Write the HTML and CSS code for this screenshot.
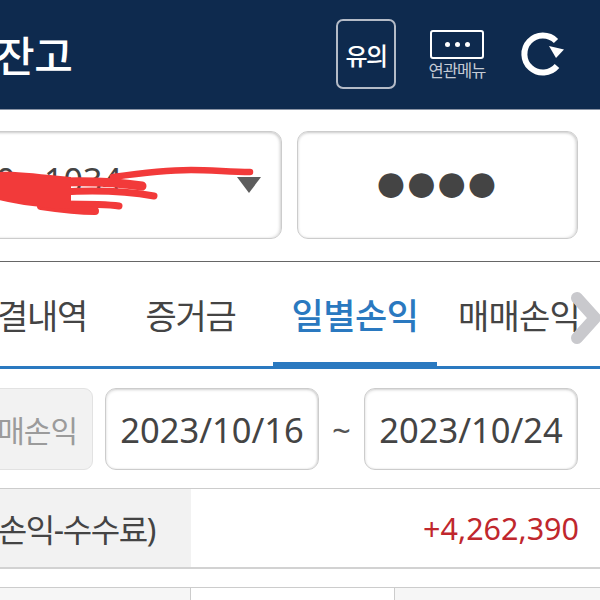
FILE: index.html
```html
<!DOCTYPE html>
<html lang="ko">
<head>
<meta charset="utf-8">
<title>잔고</title>
<link rel="stylesheet" href="styles.css">
</head>
<body>
<div class="page">
  <header class="header">
    <h1 class="title">잔고</h1>
    <div class="actions">
      <div class="notice">유의</div>
      <div class="menu">
        <div class="menu-box"><i></i><i></i><i></i></div>
        <div class="menu-label">연관메뉴</div>
      </div>
      <svg class="refresh" width="48" height="52" viewBox="520 29 48 52">
        <path d="M557 66A18.5 18.5 0 1 1 556 41" fill="none" stroke="#fff" stroke-width="6"/>
        <path d="M549 46L564 49.5L556 58Z" fill="#fff"/>
      </svg>
    </div>
  </header>

  <section class="account-row">
    <div class="field account">
      <span class="account-no">0 - 1034</span>
      <span class="caret"></span>
      <svg class="scribble" width="260" height="60" viewBox="0 0 260 60">
        <g fill="none" stroke="#f23a3a" stroke-linecap="round" stroke-linejoin="round">
          <path d="M112 15C140 11 165 8 190 8C210 8 230 10 249 10" stroke-width="6.5"/>
          <path d="M60 20C90 19 115 20 141 24" stroke-width="9"/>
          <path d="M60 30C95 28 125 29 153 34" stroke-width="7"/>
          <path d="M60 42C85 42 105 42 118 44" stroke-width="7"/>
          <path d="M40 44C60 47 80 49 94 49" stroke-width="8"/>
        </g>
        <path d="M-2 10C15 9 35 12 70 15L70 47C40 46 20 43 -2 38Z" fill="#f23a3a"/>
      </svg>
    </div>
    <div class="field password">●●●●</div>
  </section>

  <nav class="tabs">
    <div class="tab tab-a">결내역</div>
    <div class="tab tab-b">증거금</div>
    <div class="tab tab-c active">일별손익</div>
    <div class="tab tab-d">매매손익</div>
    <svg class="next" width="32" height="54" viewBox="0 0 32 54">
      <path d="M7 7L25 27L7 47" fill="none" stroke="#c9c9cd" stroke-width="12" stroke-linecap="round" stroke-linejoin="round"/>
    </svg>
  </nav>

  <section class="filter-row">
    <div class="kind">매손익</div>
    <div class="date">2023/10/16</div>
    <div class="tilde">~</div>
    <div class="date">2023/10/24</div>
  </section>

  <section class="summary">
    <div class="summary-label">손익-수수료)</div>
    <div class="summary-value">+4,262,390</div>
  </section>

  <section class="grid-head">
    <div class="cell-a"></div>
    <div class="cell-b"></div>
    <div class="cell-c"></div>
  </section>
</div>
</body>
</html>
```

FILE: styles.css
```css
* { box-sizing: border-box; margin: 0; padding: 0; }
html, body { width: 600px; height: 600px; overflow: hidden; background: #fff; }
body { font-family: "Noto Sans", "Noto Sans CJK KR", sans-serif; color: #444; }
.page { width: 600px; height: 600px; overflow: hidden; }

.header { height: 110px; background: #0e2a4e; border-bottom: 1px solid #8a94a5; display: flex; align-items: center; justify-content: space-between; }
.title { font-size: 42px; font-weight: 500; color: #fff; margin-left: -4px; margin-top: 2px; line-height: 1; letter-spacing: -.5px; }
.actions { display: flex; align-items: center; margin-right: 32px; }
.notice { width: 60px; height: 70px; margin-top: -1px; border: 2.5px solid #b4bbc7; border-radius: 7px; color: #fff; font-size: 24px; font-weight: 500; display: flex; align-items: center; justify-content: center; letter-spacing: -1.5px; }
.menu { width: 56px; margin-left: 33px; margin-top: 1px; display: flex; flex-direction: column; align-items: center; }
.menu-box { width: 54px; height: 29px; border: 2px solid #fff; border-radius: 3px; display: flex; align-items: center; justify-content: center; gap: 5px; }
.menu-box i { width: 5px; height: 5px; border-radius: 50%; background: #fff; }
.menu-label { color: #c4cad4; font-size: 16.5px; line-height: 18px; margin-top: 3px; letter-spacing: -.9px; white-space: nowrap; }
.refresh { margin-left: 35px; margin-top: 1px; }

.account-row { display: flex; gap: 15px; margin-left: -20px; padding-top: 21px; height: 152px; border-bottom: 1px solid #666; }
.field { height: 108px; border: 1px solid #ccc; border-radius: 11px; box-shadow: inset 0 1px 3px rgba(0,0,0,.18), inset -2px 0 3px rgba(0,0,0,.08); }
.account { width: 302px; position: relative; }
.account-no { position: absolute; left: 15px; top: 25px; font-size: 34px; white-space: nowrap; }
.caret { position: absolute; right: 20px; top: 45px; border-left: 12px solid transparent; border-right: 12px solid transparent; border-top: 16px solid #5d5d5d; }
.scribble { position: absolute; left: 20px; top: 30px; overflow: visible; }
.password { width: 281px; display: flex; align-items: center; justify-content: center; padding-bottom: 4px; font-family: "DejaVu Sans", sans-serif; font-size: 32.5px; line-height: 1; letter-spacing: 2px; color: #444; }

.tabs { height: 107px; display: flex; border-bottom: 3px solid #2a79c0; position: relative; }
.tab { font-size: 34px; letter-spacing: -1.3px; text-align: center; padding-top: 30px; white-space: nowrap; line-height: 48px; }
.tab-a { width: 103px; margin-left: -11px; padding-left: 3px; }
.tab-b { width: 181px; padding-left: 16px; }
.tab-c { width: 164px; color: #2a79c0; font-size: 35px; font-weight: 500; letter-spacing: -.5px; border-bottom: 7px solid #2a79c0; height: 107px; }
.tab-d { margin-left: 21px; letter-spacing: -.8px; }
.next { position: absolute; right: -2px; top: 29px; }

.filter-row { display: flex; align-items: flex-start; margin-left: -28px; padding-top: 19px; height: 119px; }
.kind { width: 121px; height: 82px; background: #f2f2f2; border: 1px solid #e2e2e2; border-radius: 9px; color: #9b9b9b; font-size: 30px; letter-spacing: -1px; display: flex; align-items: center; justify-content: flex-end; padding-right: 15px; }
.date { width: 214px; height: 82px; border: 1px solid #ccc; border-radius: 11px; box-shadow: inset 0 1px 3px rgba(0,0,0,.16), inset -1px 0 2px rgba(0,0,0,.1); font-size: 34.5px; display: flex; align-items: center; justify-content: center; }
.kind + .date { margin-left: 12px; }
.tilde { width: 45px; height: 82px; font-size: 33px; color: #555; display: flex; align-items: center; justify-content: center; }

.summary { height: 81px; display: flex; border-top: 1px solid #ccc; border-bottom: 2px solid #d2d2d2; }
.summary-label { width: 191px; background: #f2f2f2; font-size: 32px; letter-spacing: -1.4px; display: flex; align-items: center; justify-content: flex-end; padding-right: 36px; white-space: nowrap; overflow: hidden; }
.summary-value { flex: 1; color: #c0272d; font-size: 30.5px; display: flex; align-items: center; justify-content: flex-end; padding-right: 21px; }

.grid-head { height: 20px; margin-top: 18px; display: flex; border-top: 1px solid #ccc; background: #f6f6f6; }
.cell-a { width: 191px; border-right: 1px solid #ccc; }
.cell-b { width: 204px; border-right: 1px solid #ccc; background: #fff; }
.cell-c { flex: 1; }
```
